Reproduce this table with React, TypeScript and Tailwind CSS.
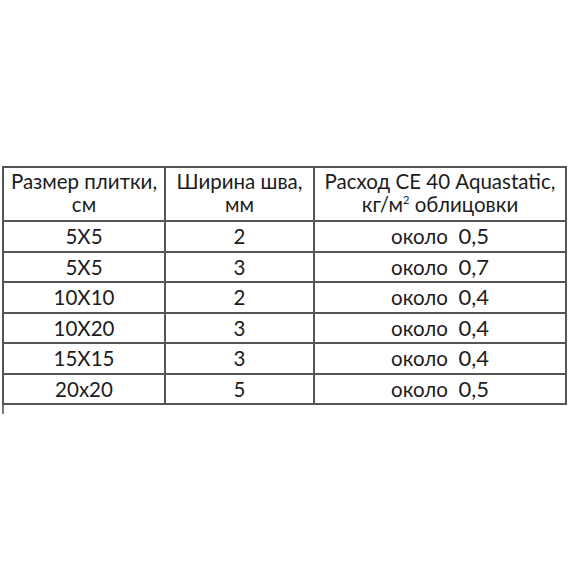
const rows = [
  ['5X5', '2', '0,5'],
  ['5X5', '3', '0,7'],
  ['10X10', '2', '0,4'],
  ['10X20', '3', '0,4'],
  ['15X15', '3', '0,4'],
  ['20x20', '5', '0,5'],
]

export default function App() {
  return (
    <div
      className="w-[569px] h-[569px] bg-white pt-[166px] pl-[2px] text-[#1c1c1c] text-[20.5px]"
      style={{ fontFamily: 'Lato, "Noto Sans", sans-serif' }}
    >
      <table className="border-collapse w-[565px] table-fixed">
        <colgroup>
          <col className="w-[162px]" />
          <col className="w-[149px]" />
          <col />
        </colgroup>
        <thead>
          <tr className="h-[54px]">
            <th className="border-2 border-[#555] font-normal leading-[23px] text-center align-middle pb-[2px]">
              Размер плитки,
              <br />
              см
            </th>
            <th className="border-2 border-[#555] font-normal leading-[23px] text-center align-middle pb-[2px]">
              Ширина шва,
              <br />
              мм
            </th>
            <th className="border-2 border-[#555] font-normal leading-[23px] text-center align-middle pb-[2px]">
              Расход СЕ 40 Aquastatic,
              <br />
              кг/м<sup className="text-[11px] relative -top-[8px]">2</sup> облицовки
            </th>
          </tr>
        </thead>
        <tbody>
          {rows.map((r, i) => (
            <tr key={i} className="h-[30.5px]">
              <td className="border-2 border-[#555] text-center leading-none">{r[0]}</td>
              <td className="border-2 border-[#555] text-center leading-none">{r[1]}</td>
              <td className="border-2 border-[#555] text-center leading-none">
                около&nbsp; <span className="text-[22px]">{r[2]}</span>
              </td>
            </tr>
          ))}
        </tbody>
      </table>
      <div className="w-[2px] h-[9px] bg-[#777]" />
    </div>
  )
}
